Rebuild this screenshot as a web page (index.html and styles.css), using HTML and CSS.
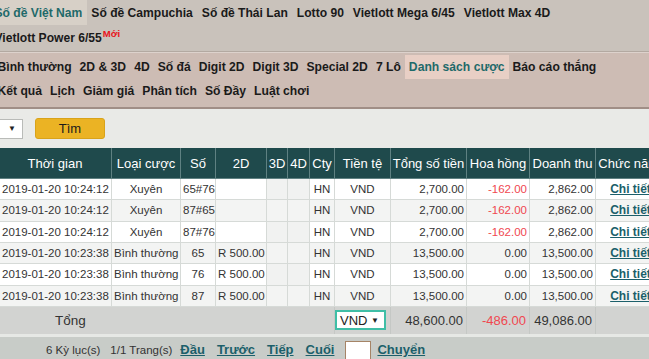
FILE: index.html
```html
<!DOCTYPE html>
<html lang="vi">
<head>
<meta charset="utf-8">
<title>Danh sách cược</title>
<link rel="stylesheet" href="styles.css">
</head>
<body>
<div class="page">
  <nav class="topnav">
    <div class="navrow">
      <a class="item active">Số đề Việt Nam</a>
      <a class="item">Số đề Campuchia</a>
      <a class="item">Số đề Thái Lan</a>
      <a class="item">Lotto 90</a>
      <a class="item">Vietlott Mega 6/45</a>
      <a class="item">Vietlott Max 4D</a>
    </div>
    <div class="navrow">
      <a class="item"><span>Vietlott Power 6/55<sup class="new">Mới</sup></span></a>
    </div>
  </nav>
  <nav class="subnav">
    <div class="navrow">
      <a class="item">Bình thường</a>
      <a class="item">2D &amp; 3D</a>
      <a class="item">4D</a>
      <a class="item">Số đá</a>
      <a class="item">Digit 2D</a>
      <a class="item">Digit 3D</a>
      <a class="item">Special 2D</a>
      <a class="item">7 Lô</a>
      <a class="item active">Danh sách cược</a>
      <a class="item">Báo cáo thắng</a>
    </div>
    <div class="navrow">
      <a class="item">Kết quả</a>
      <a class="item">Lịch</a>
      <a class="item">Giảm giá</a>
      <a class="item">Phân tích</a>
      <a class="item">Số Đầy</a>
      <a class="item">Luật chơi</a>
    </div>
  </nav>
  <main class="content">
    <div class="search">
      <div class="select"><span class="arrow">▼</span></div>
      <button class="btn">Tìm</button>
    </div>
    <table class="grid">
      <colgroup>
        <col class="c-time"><col class="c-type"><col class="c-num"><col class="c-2d"><col class="c-3d"><col class="c-4d"><col class="c-cty"><col class="c-cur"><col class="c-total"><col class="c-comm"><col class="c-rev"><col class="c-act">
      </colgroup>
      <thead>
        <tr>
          <th>Thời gian</th><th>Loại cược</th><th>Số</th><th>2D</th><th>3D</th><th>4D</th><th>Cty</th><th>Tiền tệ</th><th>Tổng số tiền</th><th>Hoa hồng</th><th>Doanh thu</th><th>Chức năng</th>
        </tr>
      </thead>
      <tbody>
        <tr><td class="l">2019-01-20 10:24:12</td><td class="c">Xuyên</td><td class="l">65#76</td><td class="l"></td><td class="sh"></td><td class="sh"></td><td class="c">HN</td><td class="c">VND</td><td class="r">2,700.00</td><td class="r neg">-162.00</td><td class="r">2,862.00</td><td class="c"><a class="link">Chi tiết</a></td></tr>
        <tr class="alt"><td class="l">2019-01-20 10:24:12</td><td class="c">Xuyên</td><td class="l">87#65</td><td class="l"></td><td class="sh"></td><td class="sh"></td><td class="c">HN</td><td class="c">VND</td><td class="r">2,700.00</td><td class="r neg">-162.00</td><td class="r">2,862.00</td><td class="c"><a class="link">Chi tiết</a></td></tr>
        <tr><td class="l">2019-01-20 10:24:12</td><td class="c">Xuyên</td><td class="l">87#76</td><td class="l"></td><td class="sh"></td><td class="sh"></td><td class="c">HN</td><td class="c">VND</td><td class="r">2,700.00</td><td class="r neg">-162.00</td><td class="r">2,862.00</td><td class="c"><a class="link">Chi tiết</a></td></tr>
        <tr class="alt"><td class="l">2019-01-20 10:23:38</td><td class="l">Bình thường</td><td class="c">65</td><td class="l">R 500.00</td><td class="sh"></td><td class="sh"></td><td class="c">HN</td><td class="c">VND</td><td class="r">13,500.00</td><td class="r">0.00</td><td class="r">13,500.00</td><td class="c"><a class="link">Chi tiết</a></td></tr>
        <tr><td class="l">2019-01-20 10:23:38</td><td class="l">Bình thường</td><td class="c">76</td><td class="l">R 500.00</td><td class="sh"></td><td class="sh"></td><td class="c">HN</td><td class="c">VND</td><td class="r">13,500.00</td><td class="r">0.00</td><td class="r">13,500.00</td><td class="c"><a class="link">Chi tiết</a></td></tr>
        <tr class="alt"><td class="l">2019-01-20 10:23:38</td><td class="l">Bình thường</td><td class="c">87</td><td class="l">R 500.00</td><td class="sh"></td><td class="sh"></td><td class="c">HN</td><td class="c">VND</td><td class="r">13,500.00</td><td class="r">0.00</td><td class="r">13,500.00</td><td class="c"><a class="link">Chi tiết</a></td></tr>
      </tbody>
      <tfoot>
        <tr>
          <td colspan="7" class="sum-label">Tổng</td>
          <td class="c"><div class="cur-select">VND <span class="arrow">▼</span></div></td>
          <td class="r">48,600.00</td>
          <td class="r neg">-486.00</td>
          <td class="r">49,086.00</td>
          <td></td>
        </tr>
      </tfoot>
    </table>
    <div class="pager">
      <span class="info">6 Kỳ lục(s)</span>
      <span class="info">1/1 Trang(s)</span>
      <a class="plink">Đầu</a>
      <a class="plink">Trước</a>
      <a class="plink">Tiếp</a>
      <a class="plink">Cuối</a>
      <span class="pinput"></span>
      <a class="plink">Chuyển</a>
    </div>
  </main>
</div>
</body>
</html>
```
FILE: styles.css
```css
html, body {
  margin: 0;
  padding: 0;
  overflow: hidden;
  background: #e9eae7;
  font-family: "Liberation Sans", Arial, sans-serif;
  color: #222;
}
.page {
  margin-left: -10px;
  width: 700px;
}
.topnav {
  background: #c9c2bb;
  border-bottom: 1px solid #b3a9a1;
  height: 51px;
}
.navrow {
  display: flex;
  height: 25px;
  align-items: stretch;
}
.item {
  display: flex;
  align-items: center;
  padding: 0 4.5px;
  font-size: 12.1px;
  font-weight: bold;
  color: #1a1a1a;
  white-space: nowrap;
}
.topnav .item.active {
  background: #d7d0c7;
  color: #1f6a6a;
}
.new {
  color: #e8141c;
  font-size: 9.5px;
  vertical-align: 5px;
  margin-left: 1px;
  line-height: 0;
}
.subnav {
  background: #cdbcb4;
  border-top: 1px solid #ddd2cc;
  border-bottom: 2px solid #a08e86;
  padding: 2px 0 2px 3.5px;
  height: 50px;
}
.subnav .navrow {
  height: 24px;
}
.subnav .item {
  padding: 0 4px;
  font-size: 12.15px;
}
.subnav .item.active {
  background: #e8cfc5;
  color: #1f6a6a;
}
.content {
  padding-left: 8px;
}
.search {
  display: flex;
  align-items: center;
  gap: 12px;
  padding: 9px 0 9px;
}
.select {
  width: 25px;
  height: 20px;
  box-sizing: border-box;
  background: #fff;
  border: 1px solid #b9bbb8;
  display: flex;
  align-items: center;
  justify-content: flex-end;
  padding-right: 6px;
}
.arrow {
  font-size: 8px;
  color: #222;
}
.btn {
  width: 70px;
  height: 21px;
  background: #ebb324;
  border: 1px solid #d9a31a;
  border-radius: 3px;
  font-family: "Liberation Sans", Arial, sans-serif;
  font-size: 13px;
  color: #1a1a1a;
  padding: 0;
}
.grid {
  border-collapse: collapse;
  table-layout: fixed;
  width: 667px;
  font-size: 11.5px;
  color: #333;
}
.c-time { width: 113px; }
.c-type { width: 69px; }
.c-num { width: 35px; }
.c-2d { width: 51px; }
.c-3d { width: 21px; }
.c-4d { width: 22px; }
.c-cty { width: 25px; }
.c-cur { width: 56px; }
.c-total { width: 76px; }
.c-comm { width: 63px; }
.c-rev { width: 66px; }
.c-act { width: 70px; }
.grid th {
  background: #1f4a4c;
  color: #fff;
  font-weight: normal;
  font-size: 13px;
  height: 30px;
  padding: 0;
  border: 1px solid #5f8182;
  border-top: none;
  white-space: nowrap;
  overflow: hidden;
}
.grid tbody td {
  height: 20.33px;
  padding: 0 2px;
  border: 1px solid #d6dad7;
  background: #fff;
  white-space: nowrap;
  overflow: hidden;
}
.grid tbody tr.alt td {
  background: #f3f4f3;
}
.grid tbody td.sh {
  background: #f1f2f1;
}
.l { text-align: left; }
.c { text-align: center; }
.r { text-align: right; }
.grid td.l:first-child { padding-left: 3px; }
.neg { color: #f0474f; }
.link {
  color: #1b5f6a;
  font-weight: bold;
  text-decoration: underline;
  font-size: 12px;
}
.grid tfoot td {
  background: #d2d3d1;
  height: 27px;
  padding: 0 3px;
  font-size: 13px;
  color: #333;
  border-left: 1px solid #c5c8c5;
  border-bottom: 3px solid #e6e8e5;
}
.grid tfoot td.neg { color: #f0474f; }
.sum-label {
  text-align: left;
  padding-left: 56px !important;
  font-size: 13.5px !important;
}
.cur-select {
  display: inline-flex;
  align-items: center;
  justify-content: space-between;
  box-sizing: border-box;
  width: 51px;
  height: 20px;
  background: #fff;
  border: 2px solid #3fbea6;
  padding: 0 5px 0 3px;
  font-size: 13px;
  color: #222;
  vertical-align: middle;
  margin-left: -4px;
}
.pager {
  background: #c8ccc8;
  height: 26px;
  display: flex;
  align-items: center;
  padding-left: 48px;
  font-size: 11.5px;
}
.info {
  color: #333;
  margin-right: 10px;
}
.info + .plink { margin-left: -2px; }
.plink {
  color: #1b5f6a;
  font-weight: bold;
  text-decoration: underline;
  font-size: 13px;
  margin-right: 12px;
}
.pinput {
  width: 24px;
  height: 21px;
  background: #fff;
  border: 1px solid #a68466;
  margin-top: 6px;
  margin-right: 6px;
  margin-left: -1px;
}
```
